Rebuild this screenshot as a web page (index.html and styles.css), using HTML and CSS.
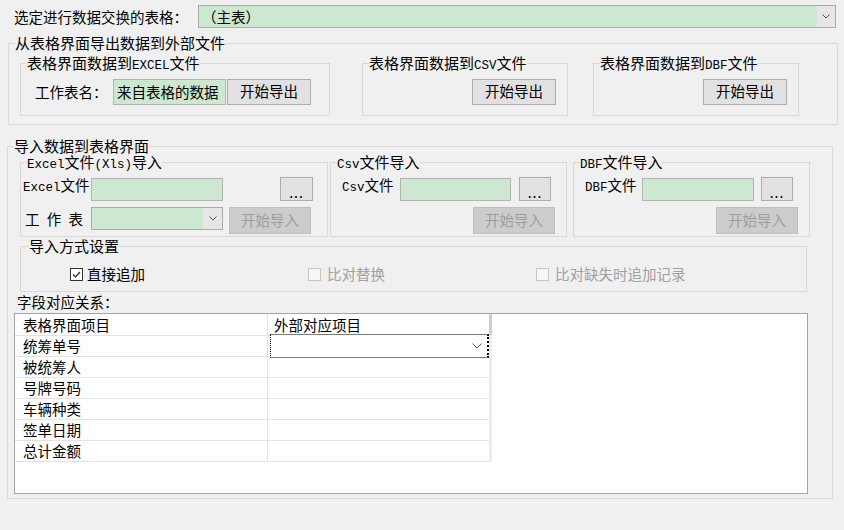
FILE: index.html
```html
<!DOCTYPE html>
<html lang="zh-CN">
<head>
<meta charset="utf-8">
<title>数据交换</title>
<link rel="stylesheet" href="styles.css">
</head>
<body>
<div class="page">
  <div class="top">
    <span class="top-label">选定进行数据交换的表格：</span>
    <div class="combo top-combo">
      <span class="combo-text">（主表）</span>
      <span class="combo-btn"><svg width="8" height="5" viewBox="0 0 8 5"><polyline points="0.5,0.5 4,4 7.5,0.5" fill="none" stroke="#555" stroke-width="1"/></svg></span>
    </div>
  </div>

  <div class="group g-export">
    <div class="gt">从表格界面导出数据到外部文件</div>
    <div class="exp-row">
      <div class="group exp-excel">
        <div class="gt">表格界面数据到<span class="l">EXCEL</span>文件</div>
        <div class="line exp-line">
          <span class="sheet-lbl">工作表名：</span>
          <div class="field sheet-name">来自表格的数据</div>
          <button class="btn exp-btn first">开始导出</button>
        </div>
      </div>
      <div class="group exp-csv">
        <div class="gt">表格界面数据到<span class="l">CSV</span>文件</div>
        <div class="line exp-line end">
          <button class="btn exp-btn">开始导出</button>
        </div>
      </div>
      <div class="group exp-dbf">
        <div class="gt">表格界面数据到<span class="l">DBF</span>文件</div>
        <div class="line exp-line end">
          <button class="btn exp-btn">开始导出</button>
        </div>
      </div>
    </div>
  </div>

  <div class="group g-import">
    <div class="gt">导入数据到表格界面</div>
    <div class="imp-row">
      <div class="group imp-excel">
        <div class="gt"><span class="l">Excel</span>文件<span class="l">(Xls)</span>导入</div>
        <div class="line row1">
          <span class="flbl w68"><span class="l">Excel</span>文件</span>
          <div class="field in132"></div>
          <button class="btn dots ml57">...</button>
        </div>
        <div class="line row2">
          <span class="flbl2 w68 spaced">工 作 表</span>
          <div class="combo sel132">
            <span class="combo-text"></span>
            <span class="combo-btn"><svg width="8" height="5" viewBox="0 0 8 5"><polyline points="0.5,0.5 4,4 7.5,0.5" fill="none" stroke="#555" stroke-width="1"/></svg></span>
          </div>
          <button class="btn disabled imp-btn ml6">开始导入</button>
        </div>
      </div>
      <div class="group imp-csv">
        <div class="gt"><span class="l">Csv</span>文件导入</div>
        <div class="line row1 pl11">
          <span class="flbl w58"><span class="l">Csv</span>文件</span>
          <div class="field in111"></div>
          <button class="btn dots w32 ml8">...</button>
        </div>
        <div class="line row2 end">
          <button class="btn disabled imp-btn">开始导入</button>
        </div>
      </div>
      <div class="group imp-dbf">
        <div class="gt"><span class="l">DBF</span>文件导入</div>
        <div class="line row1 pl11">
          <span class="flbl w57"><span class="l">DBF</span>文件</span>
          <div class="field in112"></div>
          <button class="btn dots w32 ml7">...</button>
        </div>
        <div class="line row2 end">
          <button class="btn disabled imp-btn">开始导入</button>
        </div>
      </div>
    </div>

    <div class="group mode">
      <div class="gt mode-title">导入方式设置</div>
      <div class="line mode-row">
        <label class="chk w238"><span class="box checked"><svg width="11" height="11" viewBox="0 0 11 11"><polyline points="2,5.5 4.5,8 9,3" fill="none" stroke="#222" stroke-width="1.2"/></svg></span>直接追加</label>
        <label class="chk w228 off"><span class="box"></span>比对替换</label>
        <label class="chk off"><span class="box"></span>比对缺失时追加记录</label>
      </div>
    </div>

    <div class="map-label">字段对应关系：</div>
    <div class="gridbox">
      <div class="tbl-wrap">
        <div class="tbl">
          <div class="cell c1 head">表格界面项目</div>
          <div class="cell c2 head">外部对应项目</div>
          <div class="cell c1">统筹单号</div>
          <div class="cell c2 editing">
            <div class="edit-combo">
              <span class="combo-text"></span>
              <span class="edit-btn"><svg width="10" height="6" viewBox="0 0 10 6"><polyline points="0.5,0.5 5,5 9.5,0.5" fill="none" stroke="#555" stroke-width="1"/></svg></span>
            </div>
          </div>
          <div class="cell c1">被统筹人</div>
          <div class="cell c2"></div>
          <div class="cell c1">号牌号码</div>
          <div class="cell c2"></div>
          <div class="cell c1">车辆种类</div>
          <div class="cell c2"></div>
          <div class="cell c1">签单日期</div>
          <div class="cell c2"></div>
          <div class="cell c1">总计金额</div>
          <div class="cell c2"></div>
        </div>
        <div class="strip"><div class="strip-top"></div></div>
      </div>
    </div>
  </div>
</div>
</body>
</html>
```

FILE: styles.css
```css
* { box-sizing: border-box; }
html, body { margin: 0; background: #f0f0f0; }
body {
  font-family: "Noto Sans CJK SC", "Noto Sans", sans-serif;
  font-size: 14.5px;
  color: #000;
  width: 844px;
  height: 530px;
  overflow: hidden;
}
.page { padding-top: 5px; }

.l { font-family: "Liberation Mono", monospace; font-size: 12.5px; line-height: 1; }

/* top row */
.top { display: flex; align-items: center; height: 23px; }
.top-label { width: 198px; padding-left: 14px; line-height: 23px; }
.combo {
  display: flex;
  border: 1px solid #ababab;
  background: #cde8d0;
}
.top-combo { width: 638px; height: 23px; }
.combo-text { flex: 1; padding-left: 3px; line-height: 21px; white-space: nowrap; }
.combo-btn {
  width: 18px;
  background: #e6e6e6;
  display: flex;
  align-items: center;
  justify-content: center;
}

/* group boxes */
.group { border: 1px solid #d9d9d9; }
.gt {
  display: table;
  margin: -9px 0 0 6px;
  height: 16px;
  line-height: 16px;
  font-size: 15px;
  background: #f0f0f0;
  white-space: nowrap;
}

.line { display: flex; align-items: center; }
.line.end { justify-content: flex-end; padding-right: 11px; }

.field {
  border: 1px solid #b4b4b4;
  background: #cde8d0;
  white-space: nowrap;
  overflow: hidden;
}

.btn {
  font: inherit;
  color: #000;
  background: #e1e1e1;
  border: 1px solid #adadad;
  padding: 0;
  margin: 0;
  line-height: 1;
}
.btn.disabled { background: #cccccc; border-color: #bfbfbf; color: #9f9f9f; }

/* export group */
.g-export { margin: 15px 0 0 8px; width: 830px; height: 82px; }
.exp-row { display: flex; margin-top: 12px; padding-left: 11px; }
.exp-excel { width: 310px; height: 53px; }
.exp-csv { width: 206px; height: 53px; margin-left: 32px; }
.exp-dbf { width: 206px; height: 53px; margin-left: 25px; }
.exp-line { margin-top: 6px; height: 26px; }
.exp-excel .exp-line { padding-left: 14px; }
.sheet-lbl { width: 78px; line-height: 26px; }
.sheet-name { width: 113px; height: 26px; padding-left: 3px; line-height: 24px; }
.exp-btn { width: 84px; height: 26px; }
.exp-btn.first { margin-left: 1px; }

/* import group */
.g-import { margin: 21px 0 0 7px; width: 826px; padding-bottom: 4px; }
.imp-row { display: flex; margin-top: 8px; padding-left: 12px; }
.imp-excel { width: 308px; height: 75px; }
.imp-csv { width: 237px; height: 75px; margin-left: 2px; }
.imp-dbf { width: 237px; height: 75px; margin-left: 6px; }

.row1 { margin-top: 5px; height: 24px; align-items: flex-end; padding-left: 2px; }
.row1.pl11 { padding-left: 11px; }
.row2 { margin-top: 6px; height: 27px; padding-left: 2px; }
.row2.end { padding-left: 0; }

.flbl { align-self: flex-start; line-height: 16px; height: 16px; white-space: nowrap; }
.flbl2 { line-height: 23px; white-space: nowrap; align-self: flex-start; }
.w68 { width: 68px; }
.w58 { width: 58px; }
.w57 { width: 57px; }
.spaced { padding-left: 2px; word-spacing: 4px; }

.in132 { width: 132px; height: 23px; }
.in111 { width: 111px; height: 23px; }
.in112 { width: 112px; height: 23px; }
.sel132 { width: 132px; height: 23px; align-self: flex-start; }
.sel132 .combo-btn { width: 19px; }

.dots { width: 33px; height: 24px; line-height: 14px; padding-top: 6px; font-size: 14px; letter-spacing: 1px; }
.dots.w32 { width: 32px; }
.ml57 { margin-left: 57px; }
.ml8 { margin-left: 8px; }
.ml7 { margin-left: 7px; }
.ml6 { margin-left: 6px; }
.imp-btn { width: 82px; height: 27px; align-self: flex-start; }

/* mode group */
.mode { margin: 9px 0 0 12px; width: 787px; height: 46px; }
.mode-title { margin-left: 8px; }
.mode-row { margin-top: 10px; height: 20px; padding-left: 49px; }
.chk { display: flex; align-items: center; line-height: 20px; white-space: nowrap; }
.w238 { width: 238px; }
.w228 { width: 228px; }
.box {
  width: 13px;
  height: 13px;
  border: 1px solid #333;
  background: #fff;
  margin-right: 4px;
  display: flex;
  align-items: center;
  justify-content: center;
}
.chk.off { color: #a0a0a0; }
.chk.off .box { border-color: #c6c6c6; background: #f6f6f6; margin-right: 6px; }

/* mapping grid */
.map-label { padding-left: 9px; height: 20px; line-height: 20px; }
.gridbox {
  margin: 1px 0 0 6px;
  width: 794px;
  height: 181px;
  border: 1px solid #a4a4a4;
  background: #fff;
}
.tbl-wrap { display: flex; }
.tbl { display: grid; grid-template-columns: 253px 221px; width: 474px; }
.cell {
  height: 21px;
  line-height: 20px;
  border-bottom: 1px solid #e3e3e3;
  white-space: nowrap;
}
.cell.head { height: 22px; line-height: 21px; }
.c1 { border-right: 1px solid #e3e3e3; padding-left: 8px; }
.c2 { padding-left: 6px; }
.editing { position: relative; }
.edit-combo {
  position: absolute;
  left: 2px;
  top: -2px;
  width: 219px;
  height: 24px;
  display: flex;
  background: #fff;
  border: 1px solid #7a7a7a;
  border-left: 1px dotted #000;
  border-right: 2px dotted #000;
}
.edit-btn { width: 20px; display: flex; align-items: center; justify-content: center; }
.strip { width: 3px; height: 148px; background: #ececec; }
.strip-top { height: 21px; background: #cfcfcf; }
```
